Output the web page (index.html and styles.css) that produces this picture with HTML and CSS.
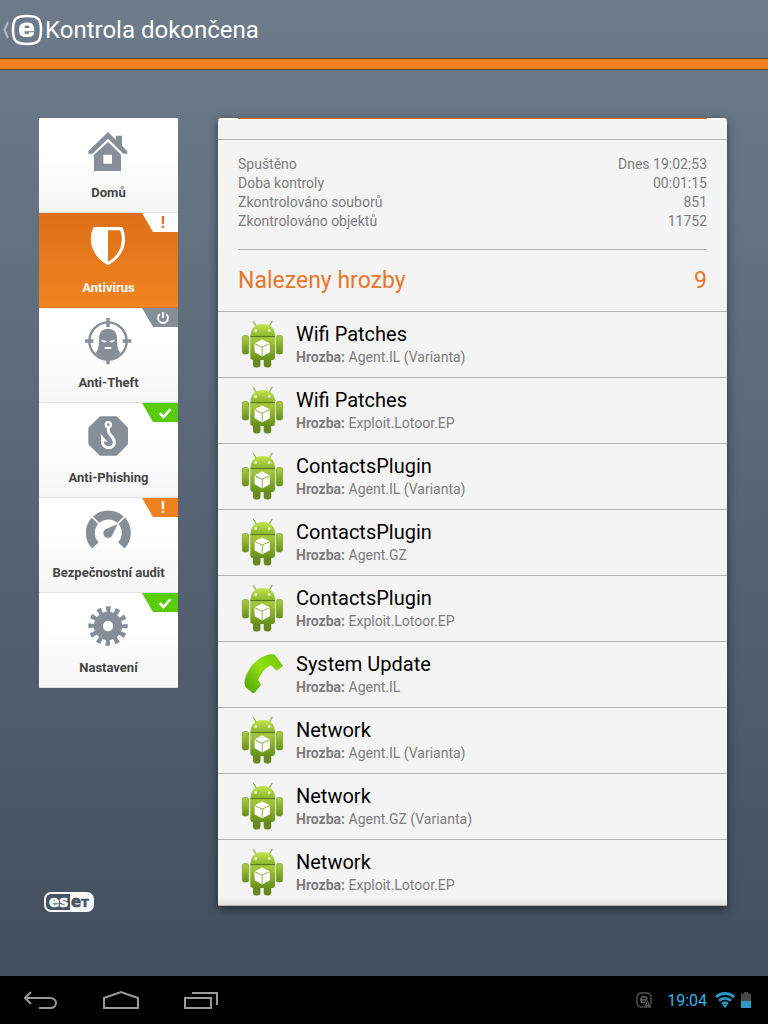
FILE: index.html
```html
<!DOCTYPE html>
<html lang="cs">
<head>
  <meta charset="UTF-8" />
  <meta name="viewport" content="width=device-width, initial-scale=1.0"/>
  <title>Kontrola dokončena</title>
  <link rel="stylesheet" href="styles.css">
</head>
<body>
  <svg class="sprite" aria-hidden="true">
    <defs>
      <linearGradient id="green" x1="0" y1="0" x2="0" y2="1">
        <stop offset="0" stop-color="#a9cc3f"/>
        <stop offset="0.5" stop-color="#8bb02a"/>
        <stop offset="1" stop-color="#668f1c"/>
      </linearGradient>
      <linearGradient id="head-green" x1="0" y1="0" x2="0" y2="1">
        <stop offset="0" stop-color="#c3e64e"/>
        <stop offset="1" stop-color="#8db42e"/>
      </linearGradient>
      <linearGradient id="phone-green" x1="1" y1="0" x2="0" y2="1">
        <stop offset="0" stop-color="#6fc400"/>
        <stop offset="0.45" stop-color="#90e012"/>
        <stop offset="1" stop-color="#4f9f00"/>
      </linearGradient>
    </defs>
    <symbol id="android" viewBox="0 0 44 48">
      <path d="M13.500 1.500l3 5M32 1.500l-3 5" stroke="#8fae3b" stroke-width="1.200" stroke-linecap="round"/>
      <path d="M10.500 16C10.500 8 15 4 22.700 4S35 8 35 16z" fill="url(#head-green)"/>
      <rect x="13" y="36" width="7.500" height="11.500" rx="3" fill="#67891f"/>
      <rect x="23.700" y="36" width="7.500" height="11.500" rx="3" fill="#67891f"/>
      <rect x="2.300" y="15.500" width="6.400" height="18.500" rx="2" fill="url(#green)" stroke="#6f9425" stroke-width="0.600"/>
      <rect x="36.200" y="15.500" width="6.400" height="18.500" rx="2" fill="url(#green)" stroke="#6f9425" stroke-width="0.600"/>
      <path d="M10.300 17H35v20c0 2-1 3-3 3H13.300c-2 0-3-1-3-3z" fill="url(#green)"/>
      <path d="M10.300 16.600H35" stroke="#5d7a20" stroke-width="1.200"/>
      <circle cx="15.700" cy="10.500" r="1.300" fill="#fff"/>
      <circle cx="29.300" cy="10.500" r="1.300" fill="#fff"/>
      <path d="M22.200 19.500l7.600 3.800v8.900L22.200 36.500 14.600 32.200v-8.900z" fill="#fff"/>
      <path d="M14.600 23.600l7.600 3.500 7.600-3.500M22.200 27v9.500" fill="none" stroke="#87a83a" stroke-width="0.900"/>
    </symbol>
    <symbol id="phone" viewBox="0 0 44 48">
      <path d="M42 14.500c1 .6.900 1.300.4 2L37.500 20c-.8.500-1.500.4-2-.2l-4.300-4.300c-3.500 0-11 8-13 14.500l2.300 3.400c.5.800.5 1.300.1 2l-5.800 7.200c-.7.900-1.500.9-2.300.3L5.500 37C3.500 34 4.500 27 9.500 19 15 10 24 5 31 4.200c2-.2 3.500.2 4.500 1.500z" fill="url(#phone-green)"/>
    </symbol>
    <symbol id="check" viewBox="0 0 14 12">
      <path d="M1.500 6l4 4 7-8" fill="none" stroke="#fff" stroke-width="2.600"/>
    </symbol>
  </svg>

  <header class="top-bar">
    <a class="back" href="#" aria-label="Zpět">
      <svg class="chevron" viewBox="0 0 8 18"><path d="M6 1L2.500 9 6 17" fill="none" stroke="#b4bcc5" stroke-width="2"/></svg>
      <svg class="logo" viewBox="0 0 32 32">
        <path d="M16 2C5 2 2 5 2 16s3 14 14 14 14-3 14-14S27 2 16 2z" fill="none" stroke="#fff" stroke-width="2.600"/>
        <path fill-rule="evenodd" d="M16 8.500c-5.500 0-8 2-8 7.500s2.500 7 8 7c5 0 7-1.200 7-4.800h-4.800c0 1.200-.6 1.700-2 1.700-2 0-2.700-1-2.700-2.600h9.800C23.300 11 21.500 8.500 16 8.500zM13.500 14c0-1.700.8-2.400 2.500-2.400s2.400.7 2.400 2.400z" fill="#fff"/>
      </svg>
    </a>
    <h1>Kontrola dokončena</h1>
  </header>

  <main>
    <div class="side">
      <nav class="menu">
        <a class="item" href="#">
          <svg class="icon" viewBox="3 0 144 144">
            <path d="M72 12l24 24V23h18v30l16 17v7h-12L72 32 26 77H13v-7z"/>
            <path fill-rule="evenodd" d="M72 42l39 38v49H30V80zM58 80v27h26V80z"/>
          </svg>
          <span>Domů</span>
        </a>
        <a class="item active" href="#">
          <span class="badge white">!</span>
          <svg class="icon" viewBox="3 0 144 144">
            <path fill-rule="evenodd" d="M29 12h86c7 14 9 28 8 42-2 34-25 58-51 73-26-15-49-39-51-73-1-14 1-28 8-42zM72 22v95c22-13 40-35 41-63 1-12-1-22-5-32z"/>
          </svg>
          <span>Antivirus</span>
        </a>
        <a class="item" href="#">
          <span class="badge gray">
            <svg width="14" height="14" viewBox="0 0 14 14" fill="none" stroke="#fff" stroke-width="1.800"><path d="M4 3a5 5 0 1 0 6 0M7 1v6"/></svg>
          </span>
          <svg class="icon" viewBox="3 0 144 144">
            <circle cx="72" cy="69" r="56" fill="none" stroke="#868e98" stroke-width="7"/>
            <path d="M67 0h10v27H67zM67 112h10v27H67zM2 64h26v10H2zM116 64h26v10h-26z"/>
            <path fill-rule="evenodd" d="M72 32c18 0 27 12 27 30 0 20 2 34 10 42-10 14-24 18-37 18s-27-4-37-18c8-8 10-22 10-42 0-18 9-30 27-30zM51 65c3 11 16 9 18 5zM93 65l-18 5c2 4 15 6 18-5zM62 87v6h20v-6z"/>
          </svg>
          <span>Anti-Theft</span>
        </a>
        <a class="item" href="#">
          <span class="badge green"><svg width="14" height="12"><use href="#check"/></svg></span>
          <svg class="icon" viewBox="3 0 144 144">
            <path d="M48 10h50l34 34v50l-34 34H48L13 94V44z"/>
            <g fill="none" stroke="#fff">
              <circle cx="73" cy="35" r="7.500" stroke-width="7"/>
              <path d="M73 43v10c0 12 18 18 18 34 0 12-8 17-18 17-11 0-18-8-18-20" stroke-width="9"/>
            </g>
            <path d="M50 62l21 25-10-2-9 5z" fill="#fff"/>
          </svg>
          <span>Anti-Phishing</span>
        </a>
        <a class="item" href="#">
          <span class="badge orange">!</span>
          <svg class="icon" viewBox="3 0 144 144">
            <path d="M34 112A54 54 0 1 1 112 112" fill="none" stroke="#868e98" stroke-width="27"/>
            <path d="M23 25l22 22M123 25l-22 22" stroke="#fff" stroke-width="5"/>
            <path d="M101 48L84 83c-8 12-27 6-26-8 0-6 3-9 8-12z"/>
          </svg>
          <span>Bezpečnostní audit</span>
        </a>
        <a class="item" href="#">
          <span class="badge green"><svg width="14" height="12"><use href="#check"/></svg></span>
          <svg class="icon" viewBox="3 0 144 144">
            <circle cx="72" cy="69" r="29" fill="none" stroke="#868e98" stroke-width="27"/>
            <circle cx="72" cy="69" r="49" fill="none" stroke="#868e98" stroke-width="20" pathLength="24" stroke-dasharray="1 1" stroke-dashoffset="0.5"/>
          </svg>
          <span>Nastavení</span>
        </a>
      </nav>
      <svg class="eset" viewBox="0 0 50 20" role="img" aria-label="eset">
        <rect x="1" y="1" width="48" height="18" rx="6" fill="none" stroke="#f4f6f8" stroke-width="2"/>
        <path d="M26 1h17c4 0 6 2 6 6v6c0 4-2 6-6 6H26z" fill="#f4f6f8"/>
        <g font-family="DejaVu Sans, sans-serif" font-weight="700" font-size="15" stroke-width="0.600">
          <text x="5" y="14.500" fill="#f4f6f8" stroke="#f4f6f8">es</text>
          <text x="27" y="14.500" fill="#475362" stroke="#475362">e<tspan font-size="11">T</tspan></text>
        </g>
      </svg>
    </div>

    <section class="panel">
      <div class="panel-top"></div>
      <div class="summary">
        <table>
          <tr><th scope="row">Spuštěno</th><td>Dnes 19:02:53</td></tr>
          <tr><th scope="row">Doba kontroly</th><td>00:01:15</td></tr>
          <tr><th scope="row">Zkontrolováno souborů</th><td>851</td></tr>
          <tr><th scope="row">Zkontrolováno objektů</th><td>11752</td></tr>
        </table>
        <h2><span>Nalezeny hrozby</span><span>9</span></h2>
      </div>
      <ul class="threats">
        <li>
          <svg><use href="#android"/></svg>
          <div><h3>Wifi Patches</h3><p><b>Hrozba:</b> Agent.IL (Varianta)</p></div>
        </li>
        <li>
          <svg><use href="#android"/></svg>
          <div><h3>Wifi Patches</h3><p><b>Hrozba:</b> Exploit.Lotoor.EP</p></div>
        </li>
        <li>
          <svg><use href="#android"/></svg>
          <div><h3>ContactsPlugin</h3><p><b>Hrozba:</b> Agent.IL (Varianta)</p></div>
        </li>
        <li>
          <svg><use href="#android"/></svg>
          <div><h3>ContactsPlugin</h3><p><b>Hrozba:</b> Agent.GZ</p></div>
        </li>
        <li>
          <svg><use href="#android"/></svg>
          <div><h3>ContactsPlugin</h3><p><b>Hrozba:</b> Exploit.Lotoor.EP</p></div>
        </li>
        <li>
          <svg><use href="#phone"/></svg>
          <div><h3>System Update</h3><p><b>Hrozba:</b> Agent.IL</p></div>
        </li>
        <li>
          <svg><use href="#android"/></svg>
          <div><h3>Network</h3><p><b>Hrozba:</b> Agent.IL (Varianta)</p></div>
        </li>
        <li>
          <svg><use href="#android"/></svg>
          <div><h3>Network</h3><p><b>Hrozba:</b> Agent.GZ (Varianta)</p></div>
        </li>
        <li>
          <svg><use href="#android"/></svg>
          <div><h3>Network</h3><p><b>Hrozba:</b> Exploit.Lotoor.EP</p></div>
        </li>
      </ul>
    </section>
  </main>

  <footer class="system-bar">
    <div class="keys">
      <button aria-label="Zpět">
        <svg viewBox="0 0 36 22"><path d="M8 3L2 9l6 6M2 9h25c8 0 8 10 0 10H16"/></svg>
      </button>
      <button aria-label="Domů">
        <svg viewBox="0 0 36 22"><path d="M1 19V9l17-6 17 6v10z"/></svg>
      </button>
      <button aria-label="Poslední aplikace">
        <svg viewBox="0 0 36 22"><path d="M2 9h26v10H2zM9 4h25v12"/></svg>
      </button>
    </div>
    <div class="status">
      <svg width="16" height="16" viewBox="0 0 16 16">
        <rect x="1" y="1" width="14" height="14" rx="4" fill="none" stroke="#555" stroke-width="1.300"/>
        <path d="M10.500 9.500c-1 1.800-5.500 2-5.500-1.700C5 3.500 11 3.500 11 7.800H6" fill="none" stroke="#555" stroke-width="1.800"/>
        <path d="M11.500 7.500L16 16H7z" fill="#555" stroke="#000" stroke-width="0.600"/>
        <path d="M11.500 10.500v2.500M11.500 14v1" stroke="#000" stroke-width="1"/>
      </svg>
      <time>19:04</time>
      <svg width="20" height="16" viewBox="0 0 20 16" fill="none" stroke="#2f98c6" stroke-width="2.900">
        <path d="M1 5.200c5-5 13-5 18 0M4 8.800c3.500-3.300 8.500-3.300 12 0M7 12c1.800-1.600 4.200-1.600 6 0"/>
        <path d="M10 16l-2.400-2.600c1.300-1 3.500-1 4.800 0z" fill="#2f98c6" stroke="none"/>
      </svg>
      <svg width="10" height="16" viewBox="0 0 10 16">
        <path d="M0 1.500h3V0h4v1.500h3V9H0z" fill="#484848"/>
        <path d="M0 9h10v7H0z" fill="#2f98c6"/>
      </svg>
    </div>
  </footer>
</body>
</html>
```
FILE: styles.css
```css
* {
  box-sizing: border-box;
}
body {
  margin: 0;
  min-height: 100vh;
  display: flex;
  flex-direction: column;
  font-family: Roboto, "Liberation Sans", sans-serif;
  background: linear-gradient(#6e7b8b 0, #6b7888 70px, #434f5e 976px);
}
h1, h2, h3, p, ul {
  margin: 0;
  padding: 0;
  font-weight: 400;
}
a {
  text-decoration: none;
}
.sprite {
  position: absolute;
  width: 0;
  height: 0;
}

.top-bar {
  height: 69px;
  display: flex;
  align-items: center;
  border-bottom: 10px solid #ee8020;
  box-shadow: inset 0 -1px #5f4023, 0 1px #5f4023;
  color: #fff;
}
.top-bar h1 {
  font-size: 24px;
}
.back {
  display: flex;
  align-items: center;
  gap: 1px;
  padding: 0 2px;
}
.chevron {
  width: 8px;
  height: 18px;
}
.logo {
  width: 32px;
  height: 32px;
}

main {
  flex: 1;
  display: grid;
  grid-template-columns: 139px 1fr;
  gap: 40px;
  padding: 49px 41px 70px 39px;
}
.side {
  display: flex;
  flex-direction: column;
  justify-content: space-between;
}
.item {
  position: relative;
  height: 95px;
  display: flex;
  flex-direction: column;
  align-items: center;
  justify-content: space-between;
  padding: 10px 0;
  border-bottom: 1px solid #dfe0e1;
  background: linear-gradient(#fff 30%, #f6f6f6);
  color: #444;
  font-size: 13px;
  line-height: 18px;
  font-weight: 700;
}
.item.active {
  background: linear-gradient(#dd6f18, #f08420);
  border-color: #e0741a;
  color: #fff;
}
.icon {
  width: 48px;
  height: 48px;
  fill: #868e98;
}
.active .icon {
  fill: #fff;
}
.badge {
  position: absolute;
  top: 0;
  right: 0;
  width: 36px;
  height: 19px;
  padding-left: 6px;
  display: flex;
  align-items: center;
  justify-content: center;
  clip-path: polygon(0 0, 100% 0, 100% 100%, 11px 100%);
  color: #fff;
  font-size: 16px;
}
.badge.white {
  background: #fff;
  color: #e0701a;
}
.badge.gray {
  background: #868e98;
}
.badge.green {
  background: #58cc0a;
}
.badge.green svg {
  margin-left: 3px;
}
.badge.orange {
  background: #ee8020;
}
.eset {
  width: 50px;
  height: 20px;
  margin-left: 5px;
  margin-bottom: -6px;
}

.panel {
  align-self: start;
  background: #f4f4f4;
  border-radius: 4px 4px 2px 2px;
  box-shadow: 0 3px 10px rgba(0, 0, 0, 0.5);
  overflow: hidden;
}
.panel-top {
  height: 22px;
  border-bottom: 1px solid #b3b3b3;
  background:
    linear-gradient(#e2640c, #e2640c) center top / calc(100% - 40px) 1px no-repeat,
    linear-gradient(#fff, #fff) top / 100% 2px no-repeat;
}
.summary {
  padding: 0 20px;
  border-bottom: 1px solid #b3b3b3;
}
.summary table {
  width: 100%;
  border-collapse: collapse;
  margin: 15px 0 18px;
  color: #7d7d7d;
  font-size: 14px;
  line-height: 19px;
}
.summary th {
  padding: 0;
  text-align: left;
  font-weight: 400;
}
.summary td {
  padding: 0;
  text-align: right;
}
.summary h2 {
  display: flex;
  justify-content: space-between;
  border-top: 1px solid #b3b3b3;
  color: #e8762b;
  font-size: 23px;
  line-height: 61px;
}
.threats {
  list-style: none;
}
.threats li {
  display: flex;
  align-items: center;
  gap: 12px;
  height: 66px;
  padding: 0 0 2px 22px;
  border-bottom: 1px solid #b3b3b3;
}
.threats li:last-child {
  background: linear-gradient(#f4f4f4 88%, #e2e2e2);
}
.threats svg {
  width: 44px;
  height: 48px;
}
.threats h3 {
  color: #000;
  font-size: 20px;
  line-height: 26px;
}
.threats p {
  color: #7d7d7d;
  font-size: 14px;
  line-height: 20px;
}

.system-bar {
  height: 48px;
  display: flex;
  align-items: center;
  justify-content: space-between;
  padding: 0 17px 0 23px;
  background: #000;
}
.keys {
  display: flex;
  gap: 44px;
}
.keys button {
  padding: 0;
  border: 0;
  background: none;
  cursor: pointer;
}
.keys svg {
  display: block;
  width: 36px;
  height: 22px;
  fill: none;
  stroke: #9a9a9a;
  stroke-width: 2;
}
.status {
  display: flex;
  align-items: center;
  gap: 6px;
  color: #33b5e5;
  font-size: 16px;
}
.status time {
  margin: 0 2px 0 9px;
}
```
